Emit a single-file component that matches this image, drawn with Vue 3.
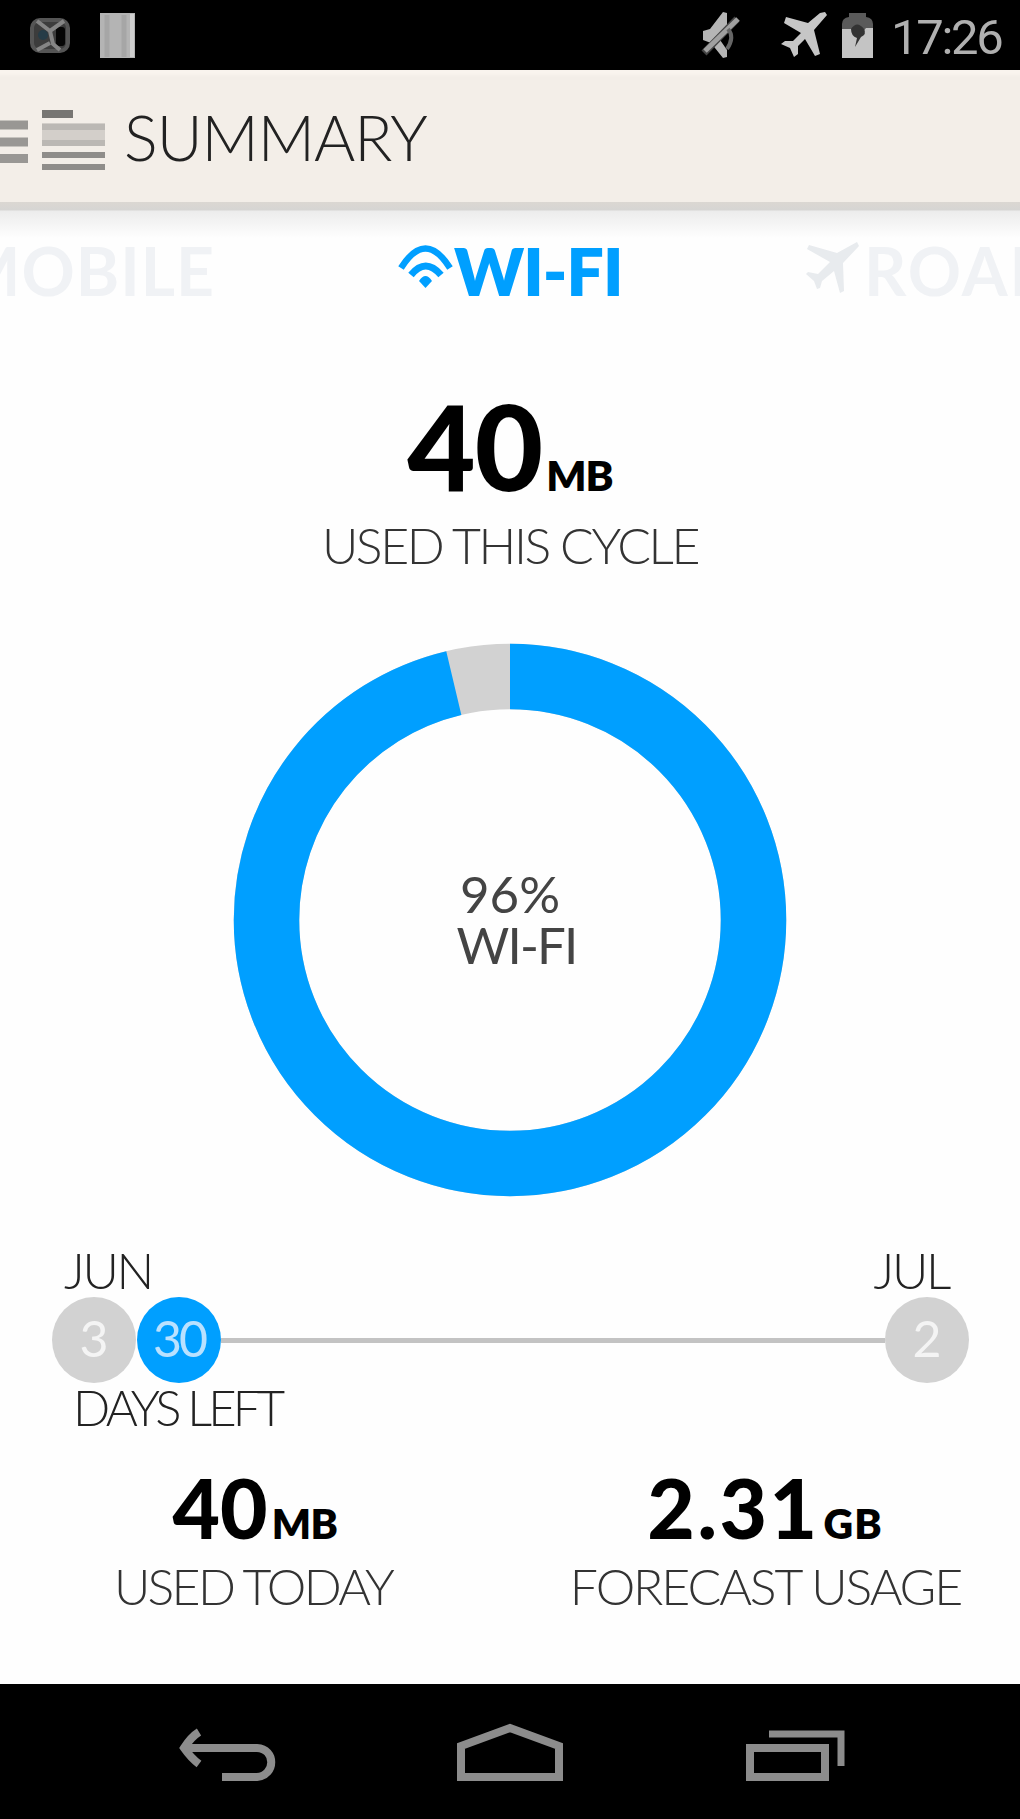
<script setup>
import { computed } from 'vue';

const percent = 96.25;
const radio = 243.5;

const circumference = 2 * Math.PI * radio;
const used = computed(() => `${(circumference * percent) / 100} ${circumference}`);

const stats = [
  { id: 'today', value: '40', unit: 'MB', label: 'USED TODAY' },
  { id: 'forecast', value: '2.31', unit: 'GB', label: 'FORECAST USAGE' },
];
</script>

<template>
  <div class="phone">
    <div class="status">
      <svg class="status-left" width="160" height="70" viewBox="0 0 160 70">
        <rect x="32" y="20" width="36" height="31" rx="8" fill="#3c3c3c" stroke="#555" stroke-width="4" />
        <rect x="56" y="27" width="9" height="19" rx="3" fill="#050505" />
        <path d="M37 21 L50 31 L64 21 M37 50 L50 43 M50 31 L53 44 L60 50" fill="none" stroke="#858585" stroke-width="4" />
        <circle cx="43" cy="35" r="5" fill="#263c47" />
        <rect x="100" y="13" width="35" height="45" fill="#b4b4b4" />
        <path d="M107 15 V57 M124 15 V57" stroke="#a6a6a6" stroke-width="5" />
        <path d="M132 14 V57" stroke="#cfcfcf" stroke-width="4" />
      </svg>
      <div class="status-right">
        <svg width="190" height="70" viewBox="690 0 190 70">
          <path d="M703 31 L710 29 L723 12 L727 13 V27 L718 37 L727 50 V57 L723 58 L711 43 L703 40 Z" fill="#b5b5b5" />
          <path d="M704 53 L737 19" stroke="#444" stroke-width="7" />
          <path d="M705 51 L738 19" stroke="#a0a0a0" stroke-width="5" />
          <path d="M728 29 Q735 37 727 49" fill="none" stroke="#666" stroke-width="4" />
          <path d="M825 12 L827 15 L814 30 L820 54 L815 56 L805 39 L798 46 L798 54 L794 57 L790 48 L781 44 L785 41 L793 41 L801 33 L784 23 L786 17 L808 23 L820 13 Z" fill="#c6c6c6" />
          <path d="M842 58 V24 Q842 18 849 17 V13 H866 V17 Q873 18 873 24 V58 Z" fill="#5a5a5a" />
          <path d="M842 29 H852 L858 38 L866 28 H873 V58 H842 Z" fill="#c4c4c4" />
          <path d="M851 29 Q857 20 864 29 Q867 34 861 37 L855 47 L857 38 Q851 36 851 29 Z" fill="#333" />
        </svg>
        <span class="clock">17:26</span>
      </div>
    </div>

    <header class="bar">
      <svg width="110" height="132" viewBox="0 70 110 132">
        <path d="M0 125 H28 M0 142 H28 M0 158.5 H28" stroke="#999794" stroke-width="9" />
        <path d="M42 114 H73" stroke="#777572" stroke-width="8" />
        <rect x="42" y="123" width="63" height="23" fill="#d3cfca" />
        <path d="M42 127 H105 M42 143 H105" stroke="#bbb8b4" stroke-width="6" />
        <path d="M42 155 H105 M42 167 H105" stroke="#8f8d8a" stroke-width="6" />
      </svg>
      <h1>SUMMARY</h1>
    </header>

    <nav class="tabs">
      <span class="tab mobile">MOBILE</span>
      <span class="tab wifi">
        <svg width="58" height="48" viewBox="396 243 58 48">
          <path d="M401 268 Q425.500 229 450 268" fill="none" stroke="#009fff" stroke-width="6.5" />
          <path d="M411 275 Q425.500 257 441 275" fill="none" stroke="#009fff" stroke-width="7" />
          <path d="M419 281 Q425.500 271 432 281 L425.500 288 Z" fill="#009fff" />
        </svg>
        <b>WI-FI</b>
      </span>
      <span class="tab roaming">
        <svg width="60" height="56" viewBox="804 240 60 56">
          <path d="M857 242 L859 246 L843 263 L844 291 L840 293 L834 271 L822 281 L820 288 L817 289 L814 281 L806 274 L808 272 L818 274 L830 262 L807 249 L809 245 L837 253 Z" fill="#e8ebee" />
        </svg>
        <b>ROAMING</b>
      </span>
    </nav>

    <main>
      <section class="total">
        <p class="big">40<small>MB</small></p>
        <p class="caption">USED THIS CYCLE</p>
      </section>

      <section class="chart">
        <svg width="554" height="554" viewBox="-277 -277 554 554">
          <circle :r="radio" fill="none" stroke="#d2d2d2" stroke-width="65.500" />
          <circle :r="radio" fill="none" stroke="#009fff" stroke-width="65.500" :stroke-dasharray="used" transform="rotate(-90)" />
        </svg>
        <div class="chart-label">
          <span class="pct">96%</span>
          <span class="name">WI-FI</span>
        </div>
      </section>

      <section class="cycle">
        <div class="months"><span class="jun">JUN</span><span class="jul">JUL</span></div>
        <div class="line">
          <span class="dot">3</span>
          <span class="dot active">30</span>
          <span class="track"></span>
          <span class="dot">2</span>
        </div>
        <p class="days">DAYS LEFT</p>
      </section>

      <section class="stats">
        <div v-for="s in stats" :key="s.id" class="stat" :class="s.id">
          <p class="num">{{ s.value }}<small>{{ s.unit }}</small></p>
          <p class="label">{{ s.label }}</p>
        </div>
      </section>
    </main>

    <footer class="buttons">
      <svg width="1020" height="135" viewBox="0 1684 1020 135" fill="none" stroke="#8c8c8c" stroke-width="8">
        <path d="M199 1732 Q191 1737 184 1748 Q191 1758 199 1764 M186 1748 H257 C276 1749 276 1775 257 1777 H222" />
        <path d="M461 1777 V1746 L510 1728 L559 1746 V1777 Z" />
        <path d="M750 1748 H825 V1777 H750 Z" />
        <path d="M769 1734 H841 V1766" stroke-width="7" />
      </svg>
    </footer>
  </div>
</template>

<style>
body {
  background: #fff;
}
</style>

<style scoped>
.phone {
  width: 1020px;
  height: 1819px;
  display: flex;
  flex-direction: column;
  overflow: hidden;
  background: #fefefe;
  color: #000;
  font-family: Lato, "Liberation Sans", sans-serif;
}

p,
h1 {
  margin: 0;
  white-space: nowrap;
}

svg {
  display: block;
  flex: none;
}

.status {
  height: 70px;
  display: flex;
  justify-content: space-between;
  background: #000;
}

.status-right {
  display: flex;
  width: 330px;
}

.clock {
  margin-left: 11px;
  color: #b0b0b0;
  font: 400 49px/75px Roboto, sans-serif;
  letter-spacing: -2.300px;
}

.bar {
  height: 132px;
  display: flex;
  background: #f3eee8;
  box-shadow: inset 0 7px 3px -2px #f9f4ee;
}

.bar h1 {
  margin-left: 14px;
  font-size: 63px;
  font-weight: 300;
  line-height: 134px;
  letter-spacing: -1px;
  color: #222;
}

.tabs {
  height: 120px;
  display: flex;
  background: linear-gradient(#dbd7d2, #d6d5d3 8px, #ececec 9px, #f6f6f6 24px, #fefefe 36px);
  font-size: 66px;
  font-weight: 700;
  color: #f0f2f5;
  line-height: 138px;
  white-space: nowrap;
}

.tab {
  display: flex;
  flex: none;
}

.tab b {
  font-weight: 800;
}

.mobile {
  width: 215px;
  justify-content: flex-end;
  letter-spacing: 1px;
}

.wifi {
  margin-left: 181px;
  width: 408px;
  color: #009fff;
  letter-spacing: -1px;
}

.wifi svg {
  margin-top: 41px;
}

.roaming svg {
  margin-top: 38px;
}

.roaming b {
  font-weight: 700;
  letter-spacing: 2px;
}

main {
  height: 1362px;
}

.total {
  height: 321px;
  text-align: center;
}

.big {
  padding-top: 59px;
  font-size: 118px;
  font-weight: 900;
  line-height: 130px;
  letter-spacing: -1px;
}

.big small {
  font-size: 42px;
  font-weight: 800;
  margin-left: 4px;
}

.caption {
  margin-top: -20px;
  font-size: 50px;
  font-weight: 300;
  line-height: 50px;
  letter-spacing: -2.400px;
  color: #333;
}

.chart {
  display: grid;
  justify-content: center;
  height: 554px;
}

.chart > * {
  grid-area: 1 / 1;
}

.chart-label {
  display: flex;
  flex-direction: column;
  align-items: center;
  padding-top: 225px;
  font-size: 51px;
  line-height: 51px;
  color: #444;
}

.name {
  padding-left: 13px;
  letter-spacing: -1.800px;
}

.cycle {
  height: 265px;
  font-size: 50px;
  font-weight: 300;
  color: #222;
}

.months {
  display: flex;
  justify-content: space-between;
  padding: 48px 71px 0 64px;
  line-height: 50px;
  letter-spacing: -2.300px;
}

.line {
  display: flex;
  align-items: center;
  height: 90px;
  padding: 0 51px 0 52px;
}

.dot {
  flex: none;
  width: 84px;
  height: 86px;
  border-radius: 50%;
  background: #d2d2d2;
  color: #f4f4f4;
  text-align: center;
  line-height: 82px;
  font-weight: 400;
}

.active {
  margin-left: 1px;
  background: #009fff;
  color: #b9e1ff;
  letter-spacing: -3px;
}

.track {
  flex: 1;
  height: 5px;
  background: #c3c3c3;
}

.days {
  margin: -3px 0 0 73px;
  font-size: 49px;
  line-height: 50px;
  letter-spacing: -3.800px;
}

.stats {
  display: flex;
}

.stat {
  width: 510px;
  text-align: center;
}

.num {
  font-size: 82px;
  font-weight: 900;
  line-height: 90px;
}

.num small {
  font-size: 41px;
  font-weight: 800;
  letter-spacing: -0.500px;
  margin-left: 4px;
}

.forecast .num {
  letter-spacing: 2.500px;
}

.forecast .num small {
  letter-spacing: 1px;
  margin-left: 4px;
}

.label {
  margin-top: -8px;
  font-size: 50px;
  font-weight: 300;
  line-height: 50px;
  letter-spacing: -2.700px;
  color: #333;
}

.today .label {
  padding-right: 4px;
}

.forecast .label {
  letter-spacing: -2.100px;
  padding-left: 1px;
}

.buttons {
  height: 135px;
  background: #000;
}
</style>
